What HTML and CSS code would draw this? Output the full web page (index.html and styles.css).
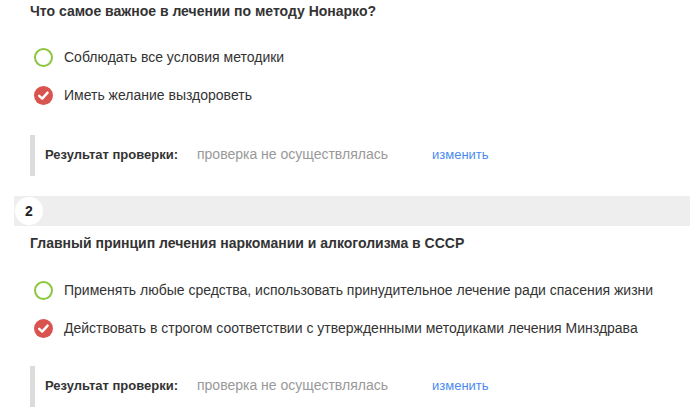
FILE: index.html
```html
<!DOCTYPE html>
<html lang="ru">
<head>
<meta charset="utf-8">
<link rel="stylesheet" href="styles.css">
</head>
<body>
<section class="question q-first">
  <h2 class="q-title">Что самое важное в лечении по методу Нонарко?</h2>
  <ul class="options">
    <li class="option"><span class="radio"></span><span>Соблюдать все условия методики</span></li>
    <li class="option"><span class="radio checked"><svg viewBox="0 0 19 19" width="19" height="19"><path d="M5.2 9.8 L8.2 12.6 L13.6 6.6" fill="none" stroke="#fff" stroke-width="2.4" stroke-linecap="round" stroke-linejoin="round"/></svg></span><span>Иметь желание выздороветь</span></li>
  </ul>
  <div class="result">
    <span class="result-label">Результат проверки:</span>
    <span class="result-status">проверка не осуществлялась</span>
    <a class="result-link">изменить</a>
  </div>
</section>
<div class="q-band"><span class="q-num">2</span></div>
<section class="question q-second">
  <h2 class="q-title">Главный принцип лечения наркомании и алкоголизма в СССР</h2>
  <ul class="options">
    <li class="option"><span class="radio"></span><span>Применять любые средства, использовать принудительное лечение ради спасения жизни</span></li>
    <li class="option"><span class="radio checked"><svg viewBox="0 0 19 19" width="19" height="19"><path d="M5.2 9.8 L8.2 12.6 L13.6 6.6" fill="none" stroke="#fff" stroke-width="2.4" stroke-linecap="round" stroke-linejoin="round"/></svg></span><span>Действовать в строгом соответствии с утвержденными методиками лечения Минздрава</span></li>
  </ul>
  <div class="result">
    <span class="result-label">Результат проверки:</span>
    <span class="result-status">проверка не осуществлялась</span>
    <a class="result-link">изменить</a>
  </div>
</section>
</body>
</html>
```
FILE: styles.css
```css
html, body {
  margin: 0;
  padding: 0;
  background: #fff;
}
body {
  font-family: "Liberation Sans", Arial, sans-serif;
  font-size: 14px;
  color: #333;
  overflow: hidden;
}
.question {
  padding-left: 30px;
}
.q-title {
  margin: 0;
  font-size: 14px;
  font-weight: bold;
  line-height: 22px;
  color: #333;
}
.q-second .q-title {
  margin-top: 6px;
}
.options {
  list-style: none;
  margin: 16px 0 0 0;
  padding: 0 0 0 4px;
}
.q-second .options {
  margin-top: 17px;
}
.option {
  display: flex;
  align-items: center;
  gap: 11px;
  height: 38px;
  line-height: 20px;
}
.radio {
  flex: none;
  width: 19px;
  height: 19px;
  box-sizing: border-box;
  border: 2px solid #8cc63e;
  border-radius: 50%;
  display: flex;
  align-items: center;
  justify-content: center;
}
.radio.checked {
  border: none;
  background: #d9534f;
}
.radio svg {
  display: block;
}
.result {
  margin-top: 21px;
  height: 41px;
  box-sizing: border-box;
  padding-bottom: 3px;
  border-left: 5px solid #dcdcdc;
  padding-left: 10px;
  display: flex;
  align-items: center;
}
.q-second .result {
  margin-top: 19px;
}
.result-label {
  width: 152px;
  font-size: 13px;
  font-weight: bold;
  flex: none;
}
.result-status {
  width: 235px;
  color: #999;
  flex: none;
}
.result-link {
  font-size: 13px;
  color: #4a8af0;
  cursor: pointer;
}
.q-band {
  margin: 20px 0 0 14px;
  height: 30px;
  background: #eee;
  display: flex;
  align-items: center;
  padding-left: 1px;
}
.q-num {
  width: 28px;
  height: 28px;
  border-radius: 50%;
  background: #fff;
  display: flex;
  align-items: center;
  justify-content: center;
  font-weight: bold;
  color: #222;
}
```
